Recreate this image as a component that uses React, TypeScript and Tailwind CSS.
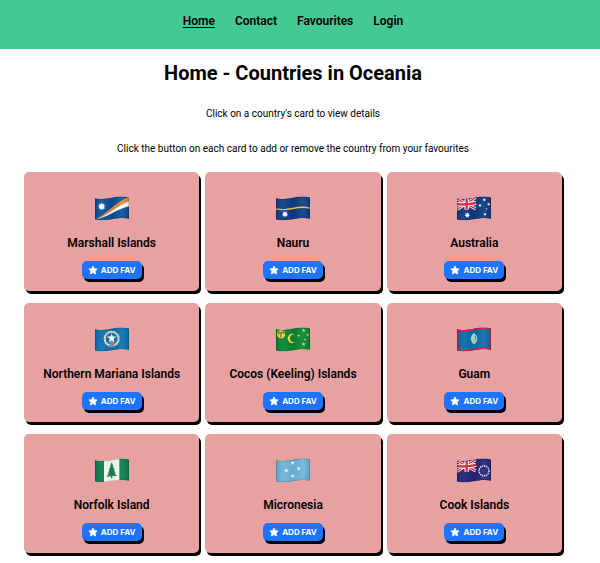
import { useId, type ReactNode } from "react";

const WAVE =
  "M0 6 C18 10 32 9 50 5 S85 -1 102 4 V68 C84 63 68 66 50 69 S16 74 0 70 Z";

function starPoints(cx: number, cy: number, r: number, n = 5, inner = 0.4) {
  return Array.from({ length: n * 2 }, (_, i) => {
    const a = (Math.PI * i) / n - Math.PI / 2;
    const d = i % 2 ? r * inner : r;
    return `${cx + d * Math.cos(a)},${cy + d * Math.sin(a)}`;
  }).join(" ");
}

type StarProps = { x: number; y: number; r: number; n?: number; inner?: number; fill?: string };

function Star({ x, y, r, n, inner, fill = "#fff" }: StarProps) {
  return <polygon points={starPoints(x, y, r, n, inner)} fill={fill} />;
}

function UnionJack() {
  return (
    <g>
      <path d="M0 8 L56 38 M0 40 L56 4" stroke="#fff" strokeWidth="9" />
      <path d="M0 8 L56 38 M0 40 L56 4" stroke="#f0203c" strokeWidth="4" />
      <path d="M0 24 Q28 27 57 20 M29 4 V41" stroke="#fff" strokeWidth="13" fill="none" />
      <path d="M0 24 Q28 27 57 20 M29 4 V41" stroke="#f0203c" strokeWidth="7" fill="none" />
    </g>
  );
}

function Flag({ name, base, children }: { name: string; base: string; children: ReactNode }) {
  const id = useId();
  return (
    <svg viewBox="0 0 102 74" role="img" aria-label={`Flag of ${name}`} className="h-[25px] w-[34px]">
      <defs>
        <clipPath id={`${id}c`}>
          <path d={WAVE} />
        </clipPath>
        <linearGradient id={`${id}g`}>
          <stop offset="0" stopColor="#000" stopOpacity="0.14" />
          <stop offset="0.22" stopColor="#fff" stopOpacity="0.06" />
          <stop offset="0.5" stopColor="#000" stopOpacity="0.06" />
          <stop offset="0.78" stopColor="#fff" stopOpacity="0.08" />
          <stop offset="1" stopColor="#000" stopOpacity="0.12" />
        </linearGradient>
      </defs>
      <g clipPath={`url(#${id}c)`}>
        <rect width="102" height="74" fill={base} />
        {children}
        <path d={WAVE} fill={`url(#${id}g)`} />
        <path d={WAVE} fill="none" stroke="#001020" strokeOpacity="0.22" strokeWidth="4" />
      </g>
    </svg>
  );
}

const countries: { name: string; base: string; art: ReactNode }[] = [
  {
    name: "Marshall Islands",
    base: "#0a4f98",
    art: (
      <>
        <path d="M0 70 C32 58 58 20 102 2 V16 C66 28 36 60 0 70 Z" fill="#f08a2c" />
        <path d="M0 70 C36 60 66 28 102 15 V30 C66 38 36 64 0 70 Z" fill="#fff" />
        <Star x={20} y={31} r={14} n={12} inner={0.5} fill="#7fb0de" />
        <circle cx="20" cy="31" r="8" fill="#fff" />
      </>
    ),
  },
  {
    name: "Nauru",
    base: "#0b3c82",
    art: (
      <>
        <path d="M0 38 C18 42 32 41 50 37 S85 31 102 36" fill="none" stroke="#f2c52e" strokeWidth="4" />
        <Star x={27} y={54} r={9} n={12} inner={0.65} />
      </>
    ),
  },
  {
    name: "Australia",
    base: "#0a3a80",
    art: (
      <>
        <UnionJack />
        <Star x={31} y={57} r={9} n={7} inner={0.5} />
        <Star x={82} y={11} r={5} n={7} inner={0.5} />
        <Star x={69} y={28} r={5} n={7} inner={0.5} />
        <Star x={95} y={24} r={5} n={7} inner={0.5} />
        <Star x={84} y={54} r={5} n={7} inner={0.5} />
        <Star x={89} y={38} r={3} />
      </>
    ),
  },
  {
    name: "Northern Mariana Islands",
    base: "#0871b4",
    art: (
      <>
        <circle cx="50" cy="35" r="21" fill="none" stroke="#e6e2c6" strokeWidth="6" />
        <circle cx="50" cy="35" r="21" fill="none" stroke="#7d9c86" strokeWidth="2" strokeDasharray="5 4" />
        <path d="M43 60 L45 34 H56 L59 60 Z" fill="#8c9397" />
        <Star x={50} y={33} r={15} />
      </>
    ),
  },
  {
    name: "Cocos (Keeling) Islands",
    base: "#078534",
    art: (
      <>
        <circle cx="15" cy="21" r="12" fill="#f5dc3c" />
        <path d="M15 30 V19 M7 21 Q9 12 15 18 Q22 11 24 21" fill="none" stroke="#5d7426" strokeWidth="4" />
        <path d="M57 22 A14 14 0 1 0 59 44 A12 12 0 1 1 57 22 Z" fill="#f8e444" />
        <Star x={83} y={10} r={6} fill="#f8e444" />
        <Star x={68} y={25} r={5} fill="#f8e444" />
        <Star x={95} y={23} r={5} fill="#f8e444" />
        <Star x={83} y={51} r={6} fill="#f8e444" />
        <Star x={87} y={37} r={4} fill="#f8e444" />
      </>
    ),
  },
  {
    name: "Guam",
    base: "#0c6aa9",
    art: (
      <>
        <path d={WAVE} fill="none" stroke="#dd2440" strokeWidth="8" />
        <path d="M51 17 Q71 34 51 53 Q32 34 51 17 Z" fill="#a9dce0" />
        <path d="M54 26 L57 33 L53 39" fill="none" stroke="#3d9169" strokeWidth="3" />
        <path d="M45 42 H57 L51 50 Z" fill="#e5c489" />
      </>
    ),
  },
  {
    name: "Norfolk Island",
    base: "#f7f8f7",
    art: (
      <>
        <path d="M0 0 H27 V74 H0 Z M73 0 H102 V74 H73 Z" fill="#08804a" />
        <path
          d="M50 12 L55 24 L53 24 L59 34 L56 34 L62 44 L58 44 L66 54 L52 53 V60 H48 V54 L34 56 L42 46 L38 46 L44 36 L41 36 L47 25 L45 25 Z"
          fill="#16854f"
        />
      </>
    ),
  },
  {
    name: "Micronesia",
    base: "#6db5d8",
    art: (
      <>
        <Star x={50} y={14} r={7} />
        <Star x={68} y={31} r={7} />
        <Star x={31} y={37} r={7} />
        <Star x={50} y={54} r={7} />
      </>
    ),
  },
  {
    name: "Cook Islands",
    base: "#24247a",
    art: (
      <>
        <UnionJack />
        <circle cx="81" cy="38" r="15" fill="none" stroke="#fff" strokeWidth="4" strokeDasharray="4 2.28" />
      </>
    ),
  },
];

const links = ["Home", "Contact", "Favourites", "Login"];

function CountryCard({ name, base, art }: { name: string; base: string; art: ReactNode }) {
  return (
    <li className="flex flex-col items-center rounded-[5px] bg-[#e8a1a1] pt-6 pb-3 shadow-[2px_3px_0_#000]">
      <Flag name={name} base={base}>
        {art}
      </Flag>
      <h2 className="mt-3 text-[12px] leading-5 font-semibold">{name}</h2>
      <button
        type="button"
        className="mt-2 flex h-[18px] w-[60px] items-center justify-center gap-[3px] rounded-[5px] bg-[#1c74ff] font-['Inter',sans-serif] text-[8px] font-bold whitespace-nowrap text-white shadow-[2px_3px_0_#000]"
      >
        <svg viewBox="0 0 24 24" aria-hidden="true" className="size-[10px] fill-current">
          <path
            d="M12 2.5 L15 8.8 L22 9.7 L17 14.6 L18.2 21.5 L12 18.2 L5.8 21.5 L7 14.6 L2 9.7 L9 8.8 Z"
            stroke="currentColor"
            strokeWidth="2"
            strokeLinejoin="round"
          />
        </svg>
        ADD FAV
      </button>
    </li>
  );
}

export default function App() {
  return (
    <div className="min-h-screen bg-white pb-2 font-['Roboto',sans-serif] text-black">
      <header className="h-[49px] bg-[#44c894] pt-3 pr-[14px]">
        <nav className="flex justify-center gap-5 text-[12px] leading-[18px] font-semibold">
          {links.map((label) => (
            <a
              key={label}
              href="#"
              className={label === "Home" ? "underline decoration-1 underline-offset-2" : ""}
            >
              {label}
            </a>
          ))}
        </nav>
      </header>
      <main className="pr-[38px] pl-6">
        <div className="text-center">
          <h1 className="pt-3 text-[20px] leading-6 font-bold">Home - Countries in Oceania</h1>
          <div className="mt-[21px] space-y-[19px] text-[10px] leading-4">
            <p>Click on a country's card to view details</p>
            <p>Click the button on each card to add or remove the country from your favourites</p>
          </div>
        </div>
        <ul className="mt-[15px] grid grid-cols-3 gap-x-1.5 gap-y-3">
          {countries.map((country) => (
            <CountryCard key={country.name} {...country} />
          ))}
        </ul>
      </main>
    </div>
  );
}
